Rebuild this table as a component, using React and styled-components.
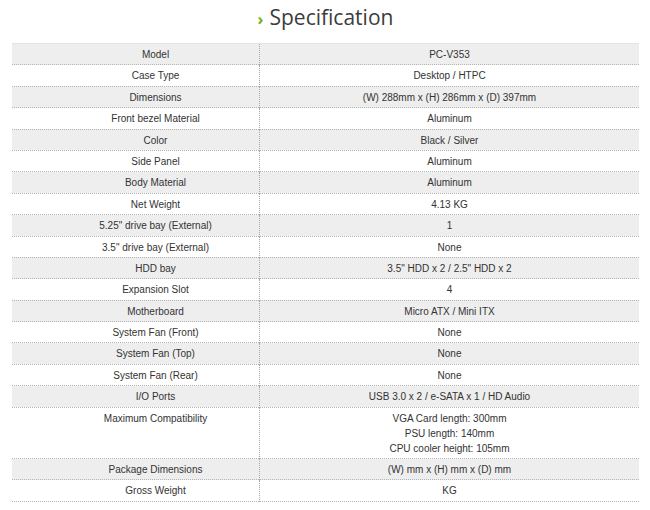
import styled, { createGlobalStyle } from "styled-components";

const specs = [
  ["Model", ["PC-V353"]],
  ["Case Type", ["Desktop / HTPC"]],
  ["Dimensions", ["(W) 288mm x (H) 286mm x (D) 397mm"]],
  ["Front bezel Material", ["Aluminum"]],
  ["Color", ["Black / Silver"]],
  ["Side Panel", ["Aluminum"]],
  ["Body Material", ["Aluminum"]],
  ["Net Weight", ["4.13 KG"]],
  ["5.25\" drive bay (External)", ["1"]],
  ["3.5\" drive bay (External)", ["None"]],
  ["HDD bay", ["3.5\" HDD x 2 / 2.5\" HDD x 2"]],
  ["Expansion Slot", ["4"]],
  ["Motherboard", ["Micro ATX / Mini ITX"]],
  ["System Fan (Front)", ["None"]],
  ["System Fan (Top)", ["None"]],
  ["System Fan (Rear)", ["None"]],
  ["I/O Ports", ["USB 3.0 x 2 / e-SATA x 1 / HD Audio"]],
  ["Maximum Compatibility", ["VGA Card length: 300mm", "PSU length: 140mm", "CPU cooler height: 105mm"]],
  ["Package Dimensions", ["(W) mm x (H) mm x (D) mm"]],
  ["Gross Weight", ["KG"]],
];

export default function App() {
  return (
    <>
      <GlobalStyle />
      <Page>
        <Heading>
          <Chevron>›</Chevron>
          Specification
        </Heading>
        <Table>
          <tbody>
            {specs.map(([label, values], i) => (
              <Row key={label} $shaded={i % 2 === 0}>
                <Label>{label}</Label>
                <Value>
                  {values.map((v) => (
                    <Line key={v}>{v}</Line>
                  ))}
                </Value>
              </Row>
            ))}
          </tbody>
        </Table>
      </Page>
    </>
  );
}

const GlobalStyle = createGlobalStyle`
  body {
    margin: 0;
    background: #ffffff;
    font-family: "Liberation Sans", Arial, sans-serif;
  }
`;

const Page = styled.div`
  width: 650px;
  padding: 0 11px 0 12px;
  box-sizing: border-box;
`;

const Heading = styled.h2`
  margin: 0;
  height: 43px;
  display: flex;
  justify-content: center;
  align-items: center;
  gap: 6px;
  padding-bottom: 10px;
  box-sizing: border-box;
  font-family: "Open Sans", sans-serif;
  font-weight: 400;
  font-size: 21px;
  color: #3c3c3c;
`;

const Chevron = styled.span`
  color: #6cb31f;
  font-weight: 700;
  font-size: 16px;
  margin-top: 5px;
`;

const Table = styled.table`
  width: 100%;
  border-collapse: collapse;
  border-top: 1px solid #e4e4e4;
  font-size: 10px;
  color: #333333;
`;

const Row = styled.tr`
  background: ${(p) => (p.$shaded ? "#eeeeee" : "#ffffff")};
  border-bottom: 1px dotted #b5b5b5;
`;

const Label = styled.td`
  width: 207px;
  padding: 3px 0 2.4px 40px;
  line-height: 15px;
  text-align: center;
  vertical-align: top;
  border-right: 1px dotted #a8a8a8;
`;

const Value = styled.td`
  padding: 3px 0 2.4px;
  line-height: 15px;
  text-align: center;
  vertical-align: top;
`;

const Line = styled.div``;
